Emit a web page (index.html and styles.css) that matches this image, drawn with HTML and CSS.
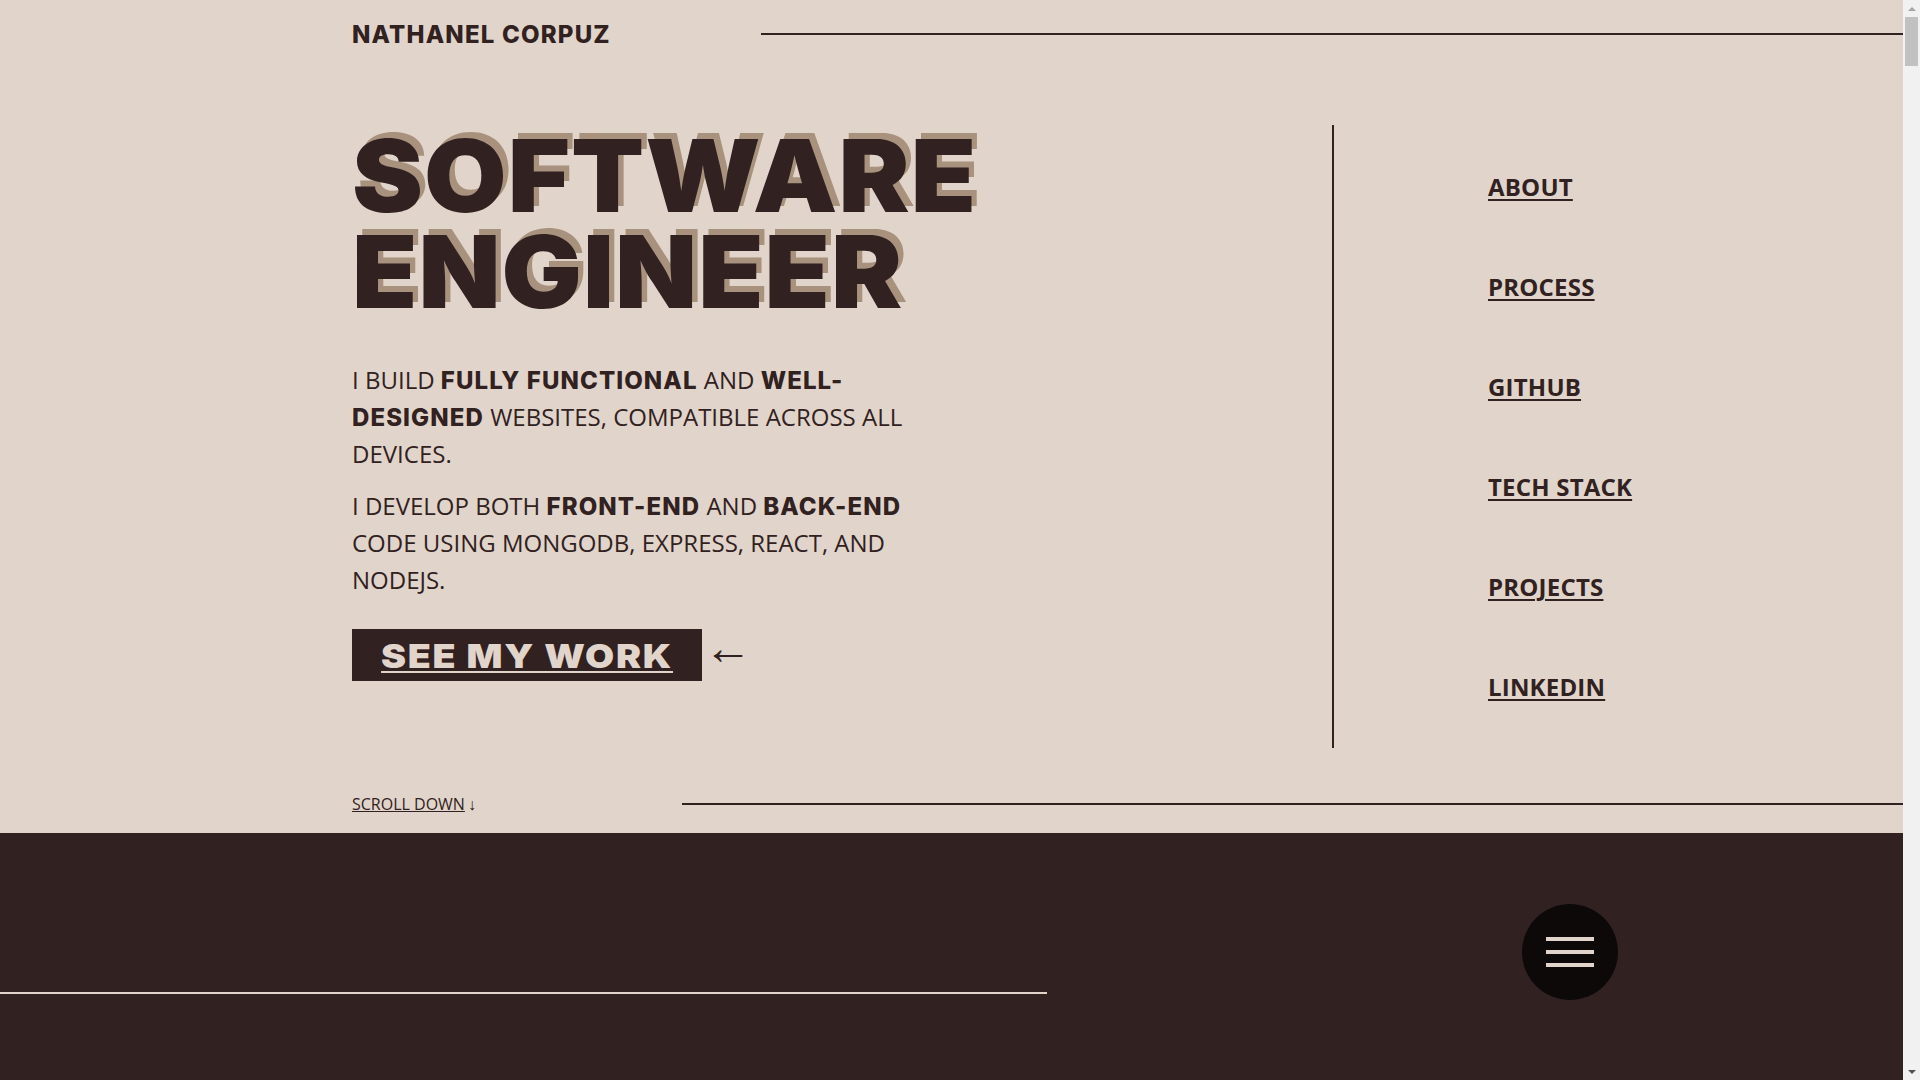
FILE: index.html
```html
<!DOCTYPE html>
<html lang="en">
<head>
<meta charset="utf-8">
<title>Nathanel Corpuz</title>
<link rel="stylesheet" href="styles.css">
</head>
<body>
<div class="light">
  <header class="topbar">
    <div class="brand">NATHANEL CORPUZ</div>
    <div class="rule"></div>
  </header>
  <main class="hero">
    <section class="intro">
      <h1 class="title"><span>SOFTWARE</span><br><span>ENGINEER</span></h1>
      <p class="lead">I BUILD <b>FULLY FUNCTIONAL</b> AND <b>WELL-DESIGNED</b> WEBSITES, COMPATIBLE ACROSS ALL DEVICES.</p>
      <p class="lead">I DEVELOP BOTH <b>FRONT-END</b> AND <b>BACK-END</b> CODE USING MONGODB, EXPRESS, REACT, AND NODEJS.</p>
      <div class="cta-row">
        <a class="cta" href="#work"><span>SEE MY WORK</span></a>
        <span class="cta-arrow">&larr;</span>
      </div>
    </section>
    <nav class="sidenav">
      <a href="#about">ABOUT</a>
      <a href="#process">PROCESS</a>
      <a href="#github">GITHUB</a>
      <a href="#stack">TECH STACK</a>
      <a href="#projects">PROJECTS</a>
      <a href="#linkedin">LINKEDIN</a>
    </nav>
  </main>
  <div class="scrollrow">
    <a class="scroll" href="#about">SCROLL DOWN</a><span class="scroll-arrow">&darr;</span>
    <div class="rule"></div>
  </div>
</div>
<section class="dark" id="work">
  <div class="dark-top">
    <div class="dark-rule"></div>
    <button class="menu" aria-label="Menu"><span></span><span></span><span></span></button>
  </div>
</section>
<div class="fake-scrollbar" aria-hidden="true">
  <div class="sb-up"></div>
  <div class="sb-track"><div class="sb-thumb"></div></div>
  <div class="sb-down"></div>
</div>
</body>
</html>
```
FILE: styles.css
```css
* { box-sizing: border-box; }
html, body { margin: 0; padding: 0; }
body {
  background: #e1d5cb;
  color: #312121;
  font-family: "Open Sans", "Noto Sans", sans-serif;
}
.light { background: #e1d5cb; }
.topbar {
  display: flex;
  align-items: center;
  height: 68px;
  padding-left: 352px;
}
.brand {
  font-family: Inter, "Liberation Sans", sans-serif;
  font-weight: 800;
  font-size: 24px;
  letter-spacing: 1.2px;
  width: 409px;
  white-space: nowrap;
}
.rule {
  flex: 1;
  border-top: 2px solid #312121;
}
.hero {
  display: flex;
}
.intro {
  width: 1332px;
  padding-left: 352px;
  padding-top: 60px;
}
.title {
  margin: 0;
  font-family: Inter, "Liberation Sans", sans-serif;
  font-weight: 900;
  font-size: 100px;
  line-height: 96px;
  letter-spacing: 1px;
  color: #312121;
}
.title span {
  display: inline-block;
  transform: scaleX(1.066);
  transform-origin: left center;
  text-shadow: 5px -6px 0 #a8927d;
}
.lead {
  width: 590px;
  margin: 41px 0 0;
  font-size: 24px;
  line-height: 37px;
}
.lead + .lead { margin-top: 15px; }
.lead b {
  font-family: Inter, "Liberation Sans", sans-serif;
  font-weight: 800;
  letter-spacing: 1.1px;
  line-height: 1;
}
.cta-row {
  display: flex;
  align-items: center;
  margin-top: 31px;
}
.cta {
  display: flex;
  justify-content: center;
  width: 350px;
  height: 52px;
  background: #312121;
  color: #e1d5cb;
  font-family: Inter, "Liberation Sans", sans-serif;
  font-weight: 900;
  font-size: 33px;
  line-height: 54px;
  text-decoration: none;
}
.cta span {
  display: inline-block;
  letter-spacing: 1.5px;
  transform: scaleX(1.14);
  text-decoration: underline;
  text-decoration-thickness: 2px;
  text-underline-offset: 3px;
}
.cta-arrow {
  margin-left: 2px;
  font-size: 48px;
  line-height: 1;
  font-family: "Liberation Sans", sans-serif;
  margin-top: -14px;
}
.sidenav {
  display: flex;
  flex-direction: column;
  border-left: 2px solid #312121;
  height: 623px;
  margin-top: 57px;
  padding-left: 154px;
  padding-top: 45px;
  gap: 67px;
}
.sidenav a {
  color: #312121;
  font-weight: 700;
  font-size: 24px;
  line-height: 33px;
  letter-spacing: 0.2px;
  text-decoration: underline;
  text-decoration-thickness: 2px;
  text-underline-offset: 3px;
}
.scrollrow {
  display: flex;
  align-items: center;
  height: 85px;
  padding-top: 27px;
  padding-left: 352px;
}
.scroll {
  color: #312121;
  font-size: 16px;
  text-decoration: underline;
}
.scroll-arrow { font-size: 16px; margin-left: 3px; }
.scrollrow .rule {
  margin-left: 206px;
}
.dark {
  background: #312121;
  height: 22222px;
}
.dark-top {
  position: relative;
  height: 200px;
}
.dark-rule {
  position: absolute;
  left: 0;
  top: 159px;
  width: 1047px;
  border-top: 2px solid #e1d5cb;
}
.menu {
  position: absolute;
  left: 1522px;
  top: 71px;
  width: 96px;
  height: 96px;
  border-radius: 50%;
  border: none;
  background: #0d0909;
  display: flex;
  flex-direction: column;
  align-items: center;
  justify-content: center;
  gap: 9px;
  padding: 0;
}
.menu span {
  display: block;
  width: 48px;
  height: 4px;
  background: #e1d5cb;
}
/* imitation of the browser's classic scrollbar seen in the screenshot */
.fake-scrollbar {
  position: fixed;
  top: 0;
  right: 0;
  width: 17px;
  height: 100vh;
  background: #f1f1f1;
  display: flex;
  flex-direction: column;
  z-index: 10;
}
.sb-up, .sb-down {
  height: 17px;
  display: flex;
  align-items: center;
  justify-content: center;
}
.sb-up::before {
  content: "";
  border-left: 4px solid transparent;
  border-right: 4px solid transparent;
  border-bottom: 4px solid #a3a3a3;
}
.sb-down::before {
  content: "";
  border-left: 4px solid transparent;
  border-right: 4px solid transparent;
  border-top: 4px solid #505050;
}
.sb-track {
  flex: 1;
  padding: 0 2px;
}
.sb-thumb {
  height: 49px;
  background: #c1c1c1;
}
```
